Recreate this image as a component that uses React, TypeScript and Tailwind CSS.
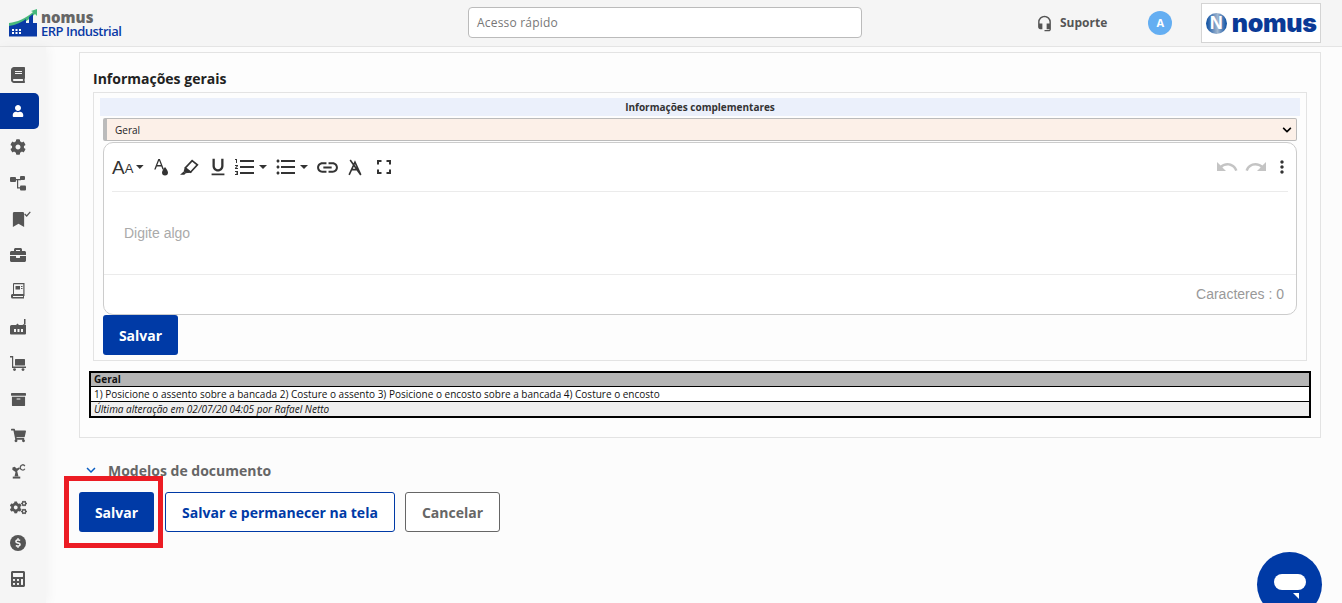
import React from "react";
import {
  FaBook, FaUser, FaCog, FaBookmark, FaBriefcase, FaArchive, FaShoppingCart, FaCogs, FaCalculator, FaDollarSign, FaChevronDown,
} from "react-icons/fa";
import {
  MdFormatUnderlined, MdFormatListNumbered, MdFormatListBulleted, MdLink, MdUndo, MdRedo, MdMoreVert, MdKeyboardArrowDown, MdHeadsetMic,
} from "react-icons/md";

const Caret = () => (
  <svg width="8" height="4" viewBox="0 0 8 4" className="ml-[3px]"><path d="M0 0h8L4 4z" fill="#333" /></svg>
);

const Tree = () => (
  <svg width="16" height="16" viewBox="0 0 16 16" fill="#555">
    <rect x="0" y="2" width="6" height="5" rx="1" />
    <rect x="10" y="1" width="5" height="4" rx="1" />
    <rect x="10" y="10.5" width="6" height="5" rx="1" />
    <path d="M5 4h6v1.2H8.2v7h2.3v1.2H7V5.2H5z" />
  </svg>
);
const BookCheck = () => (
  <span className="relative flex">
    <FaBookmark size={15} color="#555" />
    <svg width="7" height="6" viewBox="0 0 7 6" className="absolute -right-[5px] -top-[1px]"><path d="M.7 3l2 2L6.3.8" fill="none" stroke="#555" strokeWidth="1.2" /></svg>
  </span>
);
const Notebook = () => (
  <svg width="14" height="16" viewBox="0 0 14 16" fill="#555">
    <path d="M3 0h10.5v13H13v2.5H1.5A1.5 1.5 0 0 1 0 14v-1.5A1.5 1.5 0 0 1 2 11V1a1 1 0 0 1 1-1zm0 1.2V11h9.3V1.2zM2 13v1h10v-1z" fillRule="evenodd" />
    <path d="M4.5 3H9v3.5H4.5zM10 3h1.5v1H10zm0 2h1.5v1H10z" />
  </svg>
);
const Factory = () => (
  <svg width="16" height="16" viewBox="0 0 16 16" fill="#555">
    <path d="M14 0h1.5v5H14z" />
    <path d="M1.5 6H6l1.5-1.5L9 6h3.5l1.5-1 2 1v8.5a1 1 0 0 1-1 1H1a1 1 0 0 1-1-1V7.5A1.5 1.5 0 0 1 1.5 6zM4 10v3h2v-3zm3.5 0v3h2v-3zm3.5 0v3h2v-3z" fillRule="evenodd" />
  </svg>
);
const Dolly = () => (
  <svg width="16" height="16" viewBox="0 0 16 16" fill="#555">
    <path d="M0 1h3.2v10.6H16V13H2V2.4H0z" />
    <rect x="5" y="4" width="10" height="6.5" rx=".5" />
    <circle cx="4.5" cy="14.6" r="1.4" /><circle cx="13" cy="14.6" r="1.4" />
  </svg>
);
const Robot = () => (
  <svg width="15" height="15" viewBox="0 0 16 17" fill="#555">
    <path d="M1.5 16.5v-2.2h8.5v2.2z" />
    <path d="M3.5 14.3L4.6 9 1 6.5 1.2 4l2.4-1 2.4 2 3-1.2.6 1.5L6.5 7.8 8 14.3z" />
    <path d="M9.5 2.6A3.4 3.4 0 0 1 15.8 2l-1.1.7A2.1 2.1 0 0 0 11 3a2.1 2.1 0 0 0 3.7 2l1.1.7a3.4 3.4 0 0 1-6.3-.7z" />
  </svg>
);
const DollarCircle = () => (
  <span className="flex h-[16px] w-[16px] items-center justify-center rounded-full bg-[#555]"><FaDollarSign size={10} color="#f5f5f5" /></span>
);

const sideItems: { key: string; node: React.ReactNode; active?: boolean }[] = [
  { key: "book", node: <FaBook size={16} color="#555" /> },
  { key: "user", node: <FaUser size={12} color="#fff" />, active: true },
  { key: "cog", node: <FaCog size={16} color="#555" /> },
  { key: "tree", node: <Tree /> },
  { key: "mark", node: <BookCheck /> },
  { key: "case", node: <FaBriefcase size={16} color="#555" /> },
  { key: "note", node: <Notebook /> },
  { key: "factory", node: <Factory /> },
  { key: "dolly", node: <Dolly /> },
  { key: "arch", node: <FaArchive size={15} color="#555" /> },
  { key: "cart", node: <FaShoppingCart size={15} color="#555" /> },
  { key: "robot", node: <Robot /> },
  { key: "cogs", node: <FaCogs size={17} color="#555" /> },
  { key: "dollar", node: <DollarCircle /> },
  { key: "calc", node: <FaCalculator size={16} color="#555" /> },
];

const TB = ({ className = "", children }: { className?: string; children: React.ReactNode }) => (
  <span className={`flex h-[24px] items-center ${className}`}>{children}</span>
);

const Toolbar = () => (
  <div className="mx-[8px] flex h-[49px] items-center border-b border-[#ebebeb] text-[#333]">
    <TB className="w-[32px]">
      <span className="font-['Liberation_Sans',sans-serif] text-[19px] leading-none">A</span>
      <span className="font-['Liberation_Sans',sans-serif] text-[13px] leading-none mt-[3px]">A</span>
      <Caret />
    </TB>
    <TB className="ml-[9px] w-[18px]">
      <svg width="18" height="20" viewBox="0 0 18 20" fill="#333">
        <path d="M5.3 2h1.6L11 12.5H9.5L8.4 9.4H3.8l-1.1 3.1H1.2zm-1 6h3.6L6.1 3.5z" />
        <path d="M12 10c1.2 1.8 3 3.6 3 5.6a3 3 0 0 1-6 0c0-2 1.8-3.8 3-5.6z" />
      </svg>
    </TB>
    <TB className="ml-[8px] w-[21px]">
      <svg width="21" height="17" viewBox="0 0 20 16" fill="none" stroke="#333">
        <path d="M12.5 1.5l5 4L11 12.5 6 8.5z" strokeWidth="1.6" fill="#fff" />
        <path d="M6 8.5l-1 3 1.5 1.5 4.5-.5z" fill="#333" />
        <path d="M1 15l3.5-3.2 2 1.6L5 15z" fill="#333" stroke="none" />
      </svg>
    </TB>
    <TB className="ml-[8px] w-[20px]"><MdFormatUnderlined size={22} className="-mx-[1px]" /></TB>
    <TB className="ml-[6px]"><MdFormatListNumbered size={24} className="-mx-[1px]" /><Caret /></TB>
    <TB className="ml-[8px]"><MdFormatListBulleted size={24} className="-mx-[1px]" /><Caret /></TB>
    <TB className="ml-[8px]"><MdLink size={25} className="-mx-[1px]" /></TB>
    <TB className="ml-[8px] w-[17px]">
      <svg width="17" height="17" viewBox="0 0 16 16" fill="none" stroke="#333" strokeWidth="1.5">
        <path d="M2 15L7.5 3l5.5 12M4.5 10h6M3 1l10 14" />
      </svg>
    </TB>
    <TB className="ml-[12px] w-[16px]">
      <svg width="16" height="16" viewBox="0 0 16 16" fill="none" stroke="#333" strokeWidth="2">
        <path d="M2 5.5V2h3.5M10.5 2H14v3.5M14 10.5V14h-3.5M5.5 14H2v-3.5" />
      </svg>
    </TB>
    <span className="ml-auto -mr-[4px] flex items-center">
      <MdUndo size={24} color="#c4c4c4" />
      <MdRedo size={24} color="#c4c4c4" className="ml-[5px]" />
      <MdMoreVert size={20} color="#333" className="ml-[4px]" />
    </span>
  </div>
);

export default function App() {
  return (
    <div className="flex h-[603px] w-[1342px] flex-col overflow-hidden bg-[#fcfcfc] font-['Open_Sans',sans-serif] text-[#222]">
      <header className="flex h-[47px] shrink-0 items-center border-b border-[#e4e4e4] bg-[#f5f5f5]">
        <div className="flex w-[462px] shrink-0 items-center pl-[9px]">
          <svg width="28" height="28" viewBox="0 0 28 28" className="mt-[-1px]">
            <path d="M0 14C8 13 16 10 24 3l-2-1 6-2v7l-2-2C19 12 9 18 0 19z" fill="#48b97c" />
            <path d="M0 17c7-1 13-4 17-7v4h3V8l4-3v9h4v13.5H0z" fill="#0a3aa6" />
            <rect x="3" y="20" width="2" height="2" fill="#fff" /><rect x="6.5" y="20" width="2" height="2" fill="#fff" /><rect x="10" y="20" width="2" height="2" fill="#fff" />
            <rect x="3" y="23" width="2" height="2" fill="#fff" /><rect x="6.5" y="23" width="2" height="2" fill="#fff" /><rect x="10" y="23" width="2" height="2" fill="#fff" />
          </svg>
          <div className="ml-[4px] mt-[1px] flex flex-col">
            <span className="h-[14px] text-[15px] font-extrabold leading-[14px] text-[#666]">nomus</span>
            <span className="h-[14px] text-[13px] font-semibold leading-[14px] tracking-[-0.5px] text-[#0a3aa6]">ERP Industrial</span>
          </div>
        </div>
        <div className="ml-[6px] mt-[-1px] flex h-[31px] w-[394px] items-center rounded-[4px] border border-[#bbb] bg-white px-[8px] pt-[1px] text-[12px] tracking-[0.2px] text-[#777]">
          Acesso rápido
        </div>
        <div className="ml-[174px] flex items-center">
          <MdHeadsetMic size={17} color="#555" />
          <span className="ml-[7px] text-[12px] font-bold text-[#555]">Suporte</span>
        </div>
        <span className="ml-[41px] flex h-[24px] w-[24px] items-center justify-center rounded-full bg-[#64aef2] text-[11px] font-bold text-white">A</span>
        <div className="ml-[29px] flex h-[40px] w-[120px] items-center justify-center border border-[#d4d4d4] bg-white">
          <span className="flex h-[21px] w-[21px] items-center justify-center overflow-hidden rounded-full bg-[linear-gradient(90deg,#0b4ea2,#9fb6cf_55%,#0b4ea2)] font-['Liberation_Sans',sans-serif] text-[18px] font-bold leading-none text-white">N</span>
          <span className="ml-[5px] font-['Inter',sans-serif] text-[25px] font-black leading-none tracking-[-0.3px] text-[#0a3a96]">nomus</span>
        </div>
      </header>

      <div className="flex min-h-0 flex-1">
        <aside className="z-10 flex w-[46px] shrink-0 flex-col bg-[#f5f5f5] pt-[10px] shadow-[3px_0_10px_rgba(0,0,0,0.04)]">
          {sideItems.map((it) => (
            <div key={it.key} className={`flex h-[36px] w-[39px] shrink-0 items-center justify-center pr-[3px] ${it.active ? "rounded-r-[5px] bg-[#003399]" : ""}`}>
              {it.node}
            </div>
          ))}
        </aside>

        <main className="relative min-w-0 flex-1 pl-[33px] pr-[21px] pt-[5px]">
          <section className="h-[386px] border border-[#e3e3e3] bg-[#fdfdfd] px-[13px]">
            <h2 className="h-[39px] pt-[16px] text-[14px] font-bold leading-[20px] text-[#222]">Informações gerais</h2>
            <div className="h-[269px] border border-[#e3e3e3] px-[6px] pt-[5px]">
              <div className="flex h-[18px] items-center justify-center bg-[#ebf0fb] text-[10px] font-bold text-[#333]">Informações complementares</div>
              <div className="mx-[3px] mt-[2px] flex h-[23px] items-center justify-between rounded-[2px] border border-[#bbb] border-l-[4px] bg-[#fcf0e8] pl-[8px] pr-[4px] pt-[1px] text-[10px] text-[#222]">
                <span>Geral</span>
                <FaChevronDown size={10} color="#000" />
              </div>
              <div className="mx-[3px] mt-[1px] h-[173px] rounded-[10px] border border-[#ccc] bg-white">
                <Toolbar />
                <div className="flex h-[83px] items-center border-b border-[#ebebeb] pl-[20px] pt-[1px] font-['Liberation_Sans',sans-serif] text-[14px] text-[#aaa]">Digite algo</div>
                <div className="flex h-[39px] items-center justify-end pr-[12px] font-['Liberation_Sans',sans-serif] text-[14px] text-[#999]">Caracteres : 0</div>
              </div>
              <button className="ml-[3px] h-[40px] w-[75px] rounded-[3px] bg-[#003aa6] text-[14px] font-bold text-white">Salvar</button>
            </div>
            <table className="-mx-[4px] mt-[10px] w-[1222px] border-collapse border-2 border-black text-[10px] leading-[13px] text-[#111]">
              <tbody>
                <tr className="h-[14px] border-b border-black bg-[#b5b5b5]"><td className="px-[3px] font-bold">Geral</td></tr>
                <tr className="h-[15px] border-b border-black bg-white"><td className="px-[3px]">1) Posicione o assento sobre a bancada 2) Costure o assento 3) Posicione o encosto sobre a bancada 4) Costure o encosto</td></tr>
                <tr className="h-[14px] bg-[#eeeeee]"><td className="px-[3px] pt-[1px] italic">Última alteração em 02/07/20 04:05 por Rafael Netto</td></tr>
              </tbody>
            </table>
          </section>

          <div className="ml-[3px] mt-[22px] flex h-[20px] items-center">
            <MdKeyboardArrowDown size={18} color="#0a5ec2" />
            <span className="ml-[8px] text-[14px] font-bold text-[#666]">Modelos de documento</span>
          </div>

          <div className="relative mt-[12px] flex items-center">
            <button className="h-[40px] w-[75px] rounded-[3px] bg-[#003aa6] text-[14px] font-bold text-white">Salvar</button>
            <button className="ml-[11px] h-[40px] w-[230px] rounded-[3px] border border-[#003aa6] bg-white text-[14px] font-bold text-[#003aa6]">Salvar e permanecer na tela</button>
            <button className="ml-[10px] h-[40px] w-[95px] rounded-[3px] border border-[#666] bg-white text-[14px] font-bold text-[#666]">Cancelar</button>
            <span className="absolute left-[-15px] top-[-16px] h-[72px] w-[99px] border-[5px] border-[#ec1c24]" />
          </div>

          <div className="absolute bottom-[-14px] right-[20px] flex h-[65px] w-[65px] items-center justify-center rounded-full bg-[#003aa6]">
            <span className="relative mb-[5px] block h-[16px] w-[32px] rounded-full bg-white">
              <span className="absolute bottom-[-9px] right-[7px] h-0 w-0 border-l-[6px] border-t-[6px] border-l-transparent border-t-white" />
            </span>
          </div>
        </main>
      </div>
    </div>
  );
}
